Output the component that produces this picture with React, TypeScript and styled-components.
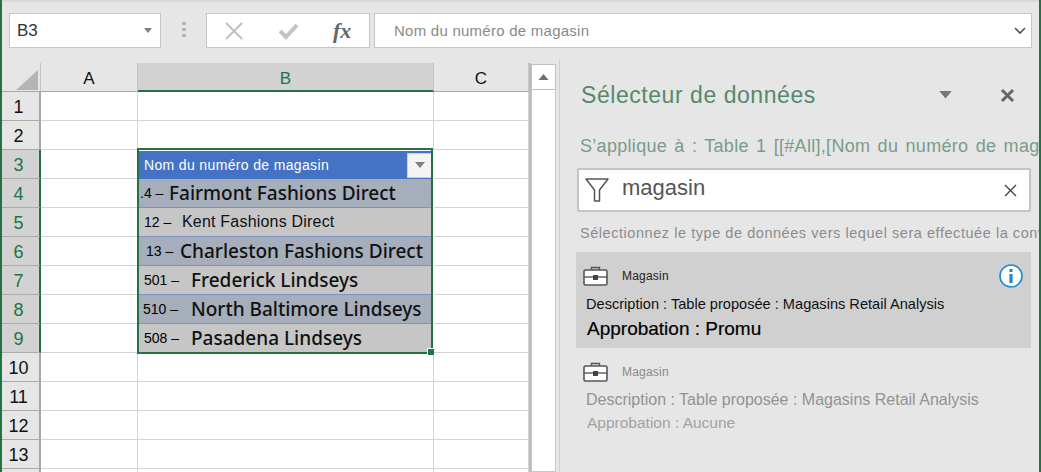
import React from 'react'
import styled, { createGlobalStyle } from 'styled-components'

const GREEN = '#217346'
const FONT = '"Liberation Sans", Arial, sans-serif'

const GlobalStyle = createGlobalStyle`
  html, body {
    margin: 0;
    padding: 0;
    background: #e6e6e6;
  }
  * {
    box-sizing: border-box;
  }
`

const Frame = styled.div`
  width: 1041px;
  height: 472px;
  overflow: hidden;
  display: flex;
  flex-direction: column;
  background: #e6e6e6;
  border-left: 2px solid ${GREEN};
  border-right: 2px solid ${GREEN};
  font-family: ${FONT};
`

const TopShade = styled.div`
  height: 3px;
  margin-bottom: 10px;
  background: linear-gradient(#d4d4d4, #e6e6e6);
`

const FormulaRow = styled.div`
  display: flex;
  align-items: stretch;
  height: 35px;
  margin-bottom: 15px;
  padding-left: 7px;
  flex: none;
`

const FieldBox = styled.div<{ $width?: number }>`
  display: flex;
  align-items: center;
  background: #fff;
  border: 1px solid #c6c6c6;
  ${p => (p.$width ? `width: ${p.$width}px;` : 'flex: none; width: 658px; margin-left: 4px;')}
`

const NameText = styled.span`
  flex: 1;
  padding-left: 7px;
  font-size: 17px;
  color: #333;
`

const Grip = styled.div`
  width: 45px;
  display: flex;
  align-items: center;
  justify-content: center;
  padding-bottom: 2px;
`

const CancelIcon = styled.svg`
  margin-left: 18px;
`

const ConfirmIcon = styled.svg`
  margin-left: 36px;
`

const FxText = styled.span`
  font-family: "Liberation Serif", serif;
  font-style: italic;
  font-weight: 700;
  font-size: 22px;
  color: #666;
  margin-left: 34px;
`

const FormulaText = styled.span`
  padding-left: 19px;
  flex: 1;
  font-size: 15px;
  letter-spacing: 0.25px;
  color: #8a8a8a;
`

const Workspace = styled.div`
  flex: 1;
  display: flex;
  min-height: 0;
`

const Sheet = styled.div`
  display: grid;
  grid-template-columns: 39px 97px 296px 95px;
  grid-auto-rows: 29px;
  flex: none;
  align-content: start;
  height: 409px;
  overflow: hidden;
  background: #fff;
`

const HeaderCell = styled.div<{ $selected?: boolean }>`
  display: flex;
  align-items: center;
  justify-content: center;
  padding-top: 4px;
  background: ${p => (p.$selected ? '#d2d2d2' : '#e6e6e6')};
  color: ${p => (p.$selected ? GREEN : '#111')};
  font-size: 17px;
  border-bottom: ${p => (p.$selected ? `2px solid ${GREEN}` : '1px solid #a8a8a8')};
  border-right: 1px solid #c4c4c4;
`

const CornerCell = styled(HeaderCell)`
  align-items: flex-end;
  justify-content: flex-end;
  padding: 0 2px 1px 0;
`

const RowHead = styled.div<{ $selected?: boolean; $row: number }>`
  grid-column: 1;
  grid-row: ${p => p.$row};
  display: flex;
  align-items: center;
  justify-content: center;
  padding: 3px 4px 0 0;
  font-size: 18px;
  background: ${p => (p.$selected ? '#d2d2d2' : '#e6e6e6')};
  color: ${p => (p.$selected ? GREEN : '#111')};
  border-bottom: 1px solid #ababab;
  border-right: ${p => (p.$selected ? `2px solid ${GREEN}` : '2px solid #a8a8a8')};
`

const Cell = styled.div<{ $col: number; $row: number }>`
  grid-column: ${p => p.$col};
  grid-row: ${p => p.$row};
  border-right: 1px solid #d4d4d4;
  border-bottom: 1px solid #d4d4d4;
`

const DataCell = styled.div<{ $row: number }>`
  grid-column: 3;
  grid-row: ${p => p.$row};
  padding: 0 3px 0 1px;
  background: #fff;
`

const TitleBand = styled.div`
  height: 28px;
  margin-top: 1px;
  display: flex;
  align-items: center;
  justify-content: space-between;
  background: #4472c4;
  color: #fff;
  font-size: 14px;
  letter-spacing: 0.35px;
  padding-left: 5px;
`

const FilterButton = styled.div`
  width: 24px;
  height: 25px;
  display: flex;
  align-items: center;
  justify-content: center;
  background: #f4f4f4;
  border: 1px solid #d0d0d0;
  border-right: none;
`

const Band = styled.div<{ $dark: boolean }>`
  height: 100%;
  display: flex;
  align-items: center;
  background: ${p => (p.$dark ? '#a6adbb' : '#c6c6c6')};
  border-bottom: 1px solid #7d92c4;
  color: #000;
`

const StoreNumber = styled.span<{ $indent: number; $nameAt: number }>`
  flex: none;
  width: ${p => p.$nameAt}px;
  padding-left: ${p => p.$indent}px;
  font-size: 14px;
  white-space: nowrap;
`

const StoreName = styled.span<{ $plain?: boolean }>`
  white-space: nowrap;
  font-family: ${p => (p.$plain ? FONT : '"Noto Sans", "Open Sans", sans-serif')};
  font-size: ${p => (p.$plain ? '16px' : '19px')};
  font-weight: ${p => (p.$plain ? 400 : 500)};
  letter-spacing: ${p => (p.$plain ? '0.2px' : '0')};
  color: #111;
`

const SelectionBox = styled.div`
  grid-column: 3;
  grid-row: 4 / 11;
  margin: -2px 1px -1px -1px;
  border: 2px solid ${GREEN};
  position: relative;
  pointer-events: none;
`

const FillHandle = styled.div`
  position: absolute;
  right: -3px;
  bottom: -3px;
  width: 7px;
  height: 7px;
  background: ${GREEN};
  border: 1px solid #fff;
  border-right: none;
  border-bottom: none;
`

const ScrollBar = styled.div`
  flex: none;
  width: 30px;
  height: 100%;
  display: flex;
  flex-direction: column;
  padding: 1px 3px 0 0;
  background: #e6e6e6;
  border-left: 2px solid #bcbcbc;
`

const ScrollUp = styled.div`
  height: 26px;
  flex: none;
  background: #fff;
  border: 1px solid #c0c0c0;
  display: flex;
  align-items: center;
  justify-content: center;
`

const ScrollTrack = styled.div`
  flex: 1;
  background: #fff;
  border: 1px solid #c8c8c8;
  border-top: none;
`

const Panel = styled.aside`
  flex: 1;
  min-width: 0;
  overflow: hidden;
  border-left: 1px solid #d0d0d0;
  margin-top: -3px;
  padding-left: 16px;
`

const PanelHead = styled.header`
  display: flex;
  align-items: center;
  height: 38px;
  margin-top: 16px;
  padding-left: 5px;
`

const PanelTitle = styled.h2`
  margin: 0;
  flex: 1;
  font-size: 23px;
  font-weight: 400;
  letter-spacing: 0.55px;
  color: #55896b;
`

const HeadIcons = styled.div`
  display: flex;
  align-items: center;
  gap: 48px;
  padding-right: 24px;
`

const AppliesTo = styled.div`
  margin-top: 22px;
  font-size: 18px;
  white-space: nowrap;
  letter-spacing: 0.3px;
  word-spacing: 2px;
  color: #7a9c89;
  padding-left: 4px;
`

const SearchBox = styled.div`
  margin-top: 11px;
  width: 454px;
  height: 44px;
  display: flex;
  align-items: center;
  background: #fff;
  border: 2px solid #c4c4c4;
  border-radius: 2px;
  margin-left: 1px;
  padding: 0 12px 0 6px;
`

const SearchText = styled.span`
  flex: 1;
  margin-left: 13px;
  padding-bottom: 5px;
  font-size: 22px;
  color: #555;
`

const Hint = styled.div`
  margin-top: 13px;
  font-size: 14.5px;
  white-space: nowrap;
  letter-spacing: 0.55px;
  color: #8c8c8c;
  padding-left: 4px;
`

const Card = styled.div<{ $active?: boolean }>`
  width: 455px;
  height: ${p => (p.$active ? '96px' : '110px')};
  margin-top: ${p => (p.$active ? '11px' : '0')};
  padding: 13px 8px 0 10px;
  background: ${p => (p.$active ? '#d0d0d0' : 'transparent')};
`

const CardHead = styled.div`
  display: flex;
  align-items: center;
  height: 22px;
  margin-left: -3px;
`

const CardType = styled.span<{ $active?: boolean }>`
  flex: 1;
  margin-left: 14px;
  font-size: 12px;
  letter-spacing: 0.2px;
  color: ${p => (p.$active ? '#222' : '#8a8a8a')};
`

const CardLine = styled.div<{ $tone: 'dark' | 'strong' | 'faint' | 'faintest' }>`
  white-space: nowrap;
  ${p =>
    p.$tone === 'dark' &&
    `margin-top: 9px; font-size: 14.6px; color: #111;`}
  ${p =>
    p.$tone === 'strong' &&
    `margin: 6px 0 0 1px; font-size: 19px; color: #000; -webkit-text-stroke: 0.2px #000;`}
  ${p =>
    p.$tone === 'faint' &&
    `margin-top: 8px; font-size: 16px; color: #939393;`}
  ${p =>
    p.$tone === 'faintest' &&
    `margin: 5px 0 0 1px; font-size: 15.5px; color: #a2a2a2;`}
`

const CaretUp = styled.svg`
  transform: rotate(180deg);
`

const stores = [
  { num: '.4 –', name: 'Fairmont Fashions Direct', indent: 1, nameAt: 30 },
  { num: '12 –', name: 'Kent Fashions Direct', indent: 5, nameAt: 43, plain: true },
  { num: '13 –', name: 'Charleston Fashions Direct', indent: 7, nameAt: 41 },
  { num: '501 –', name: 'Frederick Lindseys', indent: 5, nameAt: 52 },
  { num: '510 –', name: 'North Baltimore Lindseys', indent: 4, nameAt: 52 },
  { num: '508 –', name: 'Pasadena Lindseys', indent: 5, nameAt: 52 },
]

function Caret({ size = 9, color = '#7f7f7f' }: { size?: number; color?: string }) {
  return (
    <svg width={size} height={size / 2 + 1} viewBox="0 0 10 6">
      <path d="M0 0h10L5 6z" fill={color} />
    </svg>
  )
}

function Briefcase() {
  return (
    <svg width="25" height="20" viewBox="0 0 25 20" fill="none">
      <path d="M8.5 4V1.5h8V4" stroke="#555" strokeWidth="1.4" />
      <rect x="1" y="4" width="23" height="15" rx="1.5" fill="#fff" stroke="#555" strokeWidth="1.6" />
      <path d="M1 11h23" stroke="#555" strokeWidth="1.4" />
      <rect x="10" y="9" width="5" height="5" rx="0.5" fill="#444" />
    </svg>
  )
}

function InfoIcon() {
  return (
    <svg width="24" height="24" viewBox="0 0 24 24" fill="none">
      <circle cx="12" cy="12" r="11" fill="#fff" stroke="#1c8ad0" strokeWidth="1.6" />
      <rect x="10.4" y="5" width="3.2" height="3" fill="#1c8ad0" />
      <rect x="10.4" y="10" width="3.2" height="9" fill="#1c8ad0" />
    </svg>
  )
}

function GripDots() {
  return (
    <svg width="4" height="16" viewBox="0 0 4 16">
      <rect width="4" height="3" fill="#b4b4b4" />
      <rect y="6" width="4" height="3" fill="#b4b4b4" />
      <rect y="12" width="4" height="3" fill="#b4b4b4" />
    </svg>
  )
}

function Spreadsheet() {
  const rowNumbers = [1, 2, 3, 4, 5, 6, 7, 8, 9, 10, 11, 12, 13, 14]
  return (
    <Sheet>
      <CornerCell>
        <svg width="22" height="20" viewBox="0 0 22 20">
          <path d="M22 0v20H0z" fill="#b4b4b4" />
        </svg>
      </CornerCell>
      <HeaderCell>A</HeaderCell>
      <HeaderCell $selected>B</HeaderCell>
      <HeaderCell>C</HeaderCell>
      {rowNumbers.map(n => {
        const row = n + 1
        const selected = n >= 3 && n <= 9
        const store = stores[n - 4]
        return (
          <React.Fragment key={n}>
            <RowHead $row={row} $selected={selected}>{n}</RowHead>
            <Cell $col={2} $row={row} />
            {n === 3 && (
              <DataCell $row={row}>
                <TitleBand>
                  Nom du numéro de magasin
                  <FilterButton>
                    <Caret size={10} />
                  </FilterButton>
                </TitleBand>
              </DataCell>
            )}
            {store && (
              <DataCell $row={row}>
                <Band $dark={n % 2 === 0}>
                  <StoreNumber $indent={store.indent} $nameAt={store.nameAt}>
                    {store.num}
                  </StoreNumber>
                  <StoreName $plain={store.plain}>{store.name}</StoreName>
                </Band>
              </DataCell>
            )}
            {!selected && <Cell $col={3} $row={row} />}
            <Cell $col={4} $row={row} />
          </React.Fragment>
        )
      })}
      <SelectionBox>
        <FillHandle />
      </SelectionBox>
    </Sheet>
  )
}

function DataPicker() {
  return (
    <Panel>
      <PanelHead>
        <PanelTitle>Sélecteur de données</PanelTitle>
        <HeadIcons>
          <Caret size={13} color="#777" />
          <svg width="15" height="15" viewBox="0 0 15 15">
            <path d="M2 2l11 11M13 2L2 13" stroke="#666" strokeWidth="3" />
          </svg>
        </HeadIcons>
      </PanelHead>
      <AppliesTo>S’applique à : Table 1 [[#All],[Nom du numéro de magasin]]</AppliesTo>
      <SearchBox>
        <svg width="24" height="24" viewBox="0 0 24 24" fill="none">
          <path d="M1 1h22l-8.5 11v11h-5V12z" stroke="#555" strokeWidth="1.5" strokeLinejoin="round" />
        </svg>
        <SearchText>magasin</SearchText>
        <svg width="13" height="13" viewBox="0 0 13 13">
          <path d="M1 1l11 11M12 1L1 12" stroke="#444" strokeWidth="1.4" />
        </svg>
      </SearchBox>
      <Hint>Sélectionnez le type de données vers lequel sera effectuée la conversion</Hint>
      <Card $active>
        <CardHead>
          <Briefcase />
          <CardType $active>Magasin</CardType>
          <InfoIcon />
        </CardHead>
        <CardLine $tone="dark">Description : Table proposée : Magasins Retail Analysis</CardLine>
        <CardLine $tone="strong">Approbation : Promu</CardLine>
      </Card>
      <Card>
        <CardHead>
          <Briefcase />
          <CardType>Magasin</CardType>
        </CardHead>
        <CardLine $tone="faint">Description : Table proposée : Magasins Retail Analysis</CardLine>
        <CardLine $tone="faintest">Approbation : Aucune</CardLine>
      </Card>
    </Panel>
  )
}

export default function App() {
  return (
    <Frame>
      <GlobalStyle />
      <TopShade />
      <FormulaRow>
        <FieldBox $width={152}>
          <NameText>B3</NameText>
          <svg width="22" height="6" viewBox="0 0 22 6">
            <path d="M6 0h8l-4 5z" fill="#7f7f7f" />
          </svg>
        </FieldBox>
        <Grip>
          <GripDots />
        </Grip>
        <FieldBox $width={164}>
          <CancelIcon width="18" height="18" viewBox="0 0 18 18">
            <path d="M1 1l16 16M17 1L1 17" stroke="#c0c0c0" strokeWidth="2" />
          </CancelIcon>
          <ConfirmIcon width="20" height="18" viewBox="0 0 20 18">
            <path d="M1 9l6 6L18 3" stroke="#c4c4c4" strokeWidth="4" fill="none" />
          </ConfirmIcon>
          <FxText>fx</FxText>
        </FieldBox>
        <FieldBox>
          <FormulaText>Nom du numéro de magasin</FormulaText>
          <svg width="22" height="8" viewBox="0 0 22 8" fill="none">
            <path d="M6 1l5 5 5-5" stroke="#555" strokeWidth="1.6" />
          </svg>
        </FieldBox>
      </FormulaRow>
      <Workspace>
        <Spreadsheet />
        <ScrollBar>
          <ScrollUp>
            <CaretUp width="11" height="6" viewBox="0 0 10 6">
              <path d="M0 0h10L5 6z" fill="#707070" />
            </CaretUp>
          </ScrollUp>
          <ScrollTrack />
        </ScrollBar>
        <DataPicker />
      </Workspace>
    </Frame>
  )
}
